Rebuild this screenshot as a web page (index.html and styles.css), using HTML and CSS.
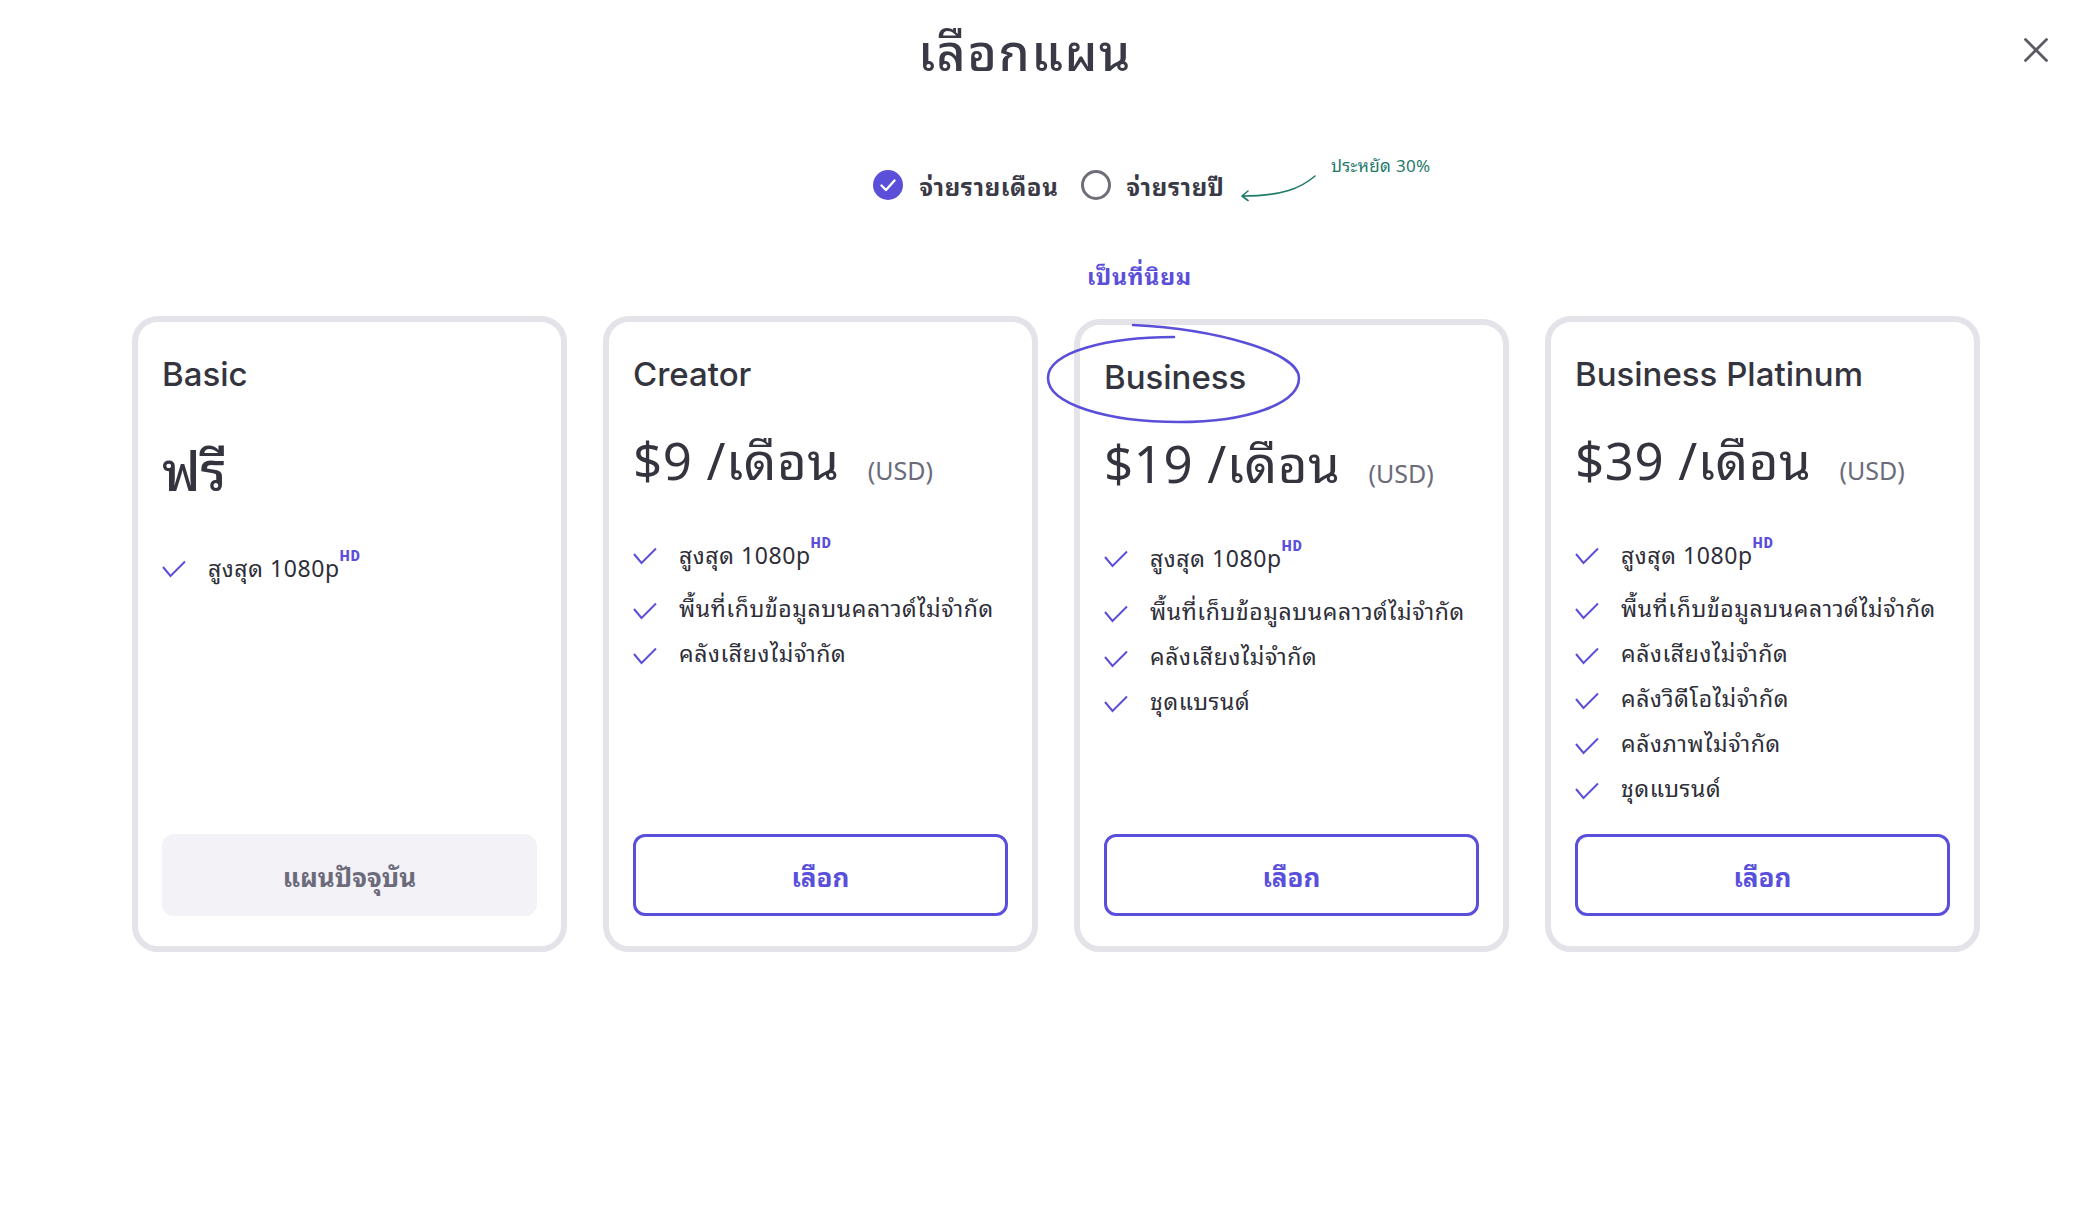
FILE: index.html
```html
<!DOCTYPE html>
<html lang="th">
<head>
<meta charset="utf-8">
<title>เลือกแผน</title>
<link rel="stylesheet" href="styles.css">
</head>
<body>
<div class="modal">
  <header class="modal-header">
    <h1 class="modal-title">เลือกแผน</h1>
    <button class="close-btn" aria-label="ปิด">
      <svg width="24" height="24" viewBox="0 0 24 24"><path d="M1.5 1.5 L22.5 22.5 M22.5 1.5 L1.5 22.5" stroke="#5b5b66" stroke-width="2.8" stroke-linecap="round" fill="none"/></svg>
    </button>
  </header>

  <div class="billing">
    <label class="billing-option">
      <span class="radio radio-checked">
        <svg width="30" height="30" viewBox="0 0 30 30"><circle cx="15" cy="15" r="15" fill="#5b4fd9"/><path d="M8.5 15.5 L13 20 L21.5 10.5" stroke="#fff" stroke-width="2.4" fill="none" stroke-linecap="round" stroke-linejoin="round"/></svg>
      </span>
      <span class="billing-label">จ่ายรายเดือน</span>
    </label>
    <label class="billing-option">
      <span class="radio radio-empty"></span>
      <span class="billing-label">จ่ายรายปี</span>
    </label>
    <div class="save-note">
      <svg class="save-arrow" width="80" height="28" viewBox="0 0 80 28"><path d="M76 2 C62 14 44 22 3 22 M3 22 L9 17 M3 22 L9 26.5" stroke="#1f7a6b" stroke-width="1.6" fill="none" stroke-linecap="round"/></svg>
      <span class="save-text">ประหยัด 30%</span>
    </div>
  </div>

  <section class="plans">
    <article class="plan">
      <h2 class="plan-name">Basic</h2>
      <div class="plan-price plan-price-free">ฟรี</div>
      <ul class="features features-free">
        <li class="feature feature-hd"><svg class="check" width="24" height="18" viewBox="0 0 24 18"><path d="M1 7 L8.5 16 L23 1.5" stroke="#5b4fd9" stroke-width="2" fill="none"/></svg><span>สูงสุด 1080p<sup class="hd">HD</sup></span></li>
      </ul>
      <button class="plan-btn plan-btn-current">แผนปัจจุบัน</button>
    </article>

    <article class="plan">
      <h2 class="plan-name">Creator</h2>
      <div class="plan-price"><span class="amount">$9 /เดือน</span><span class="currency">(USD)</span></div>
      <ul class="features">
        <li class="feature feature-hd"><svg class="check" width="24" height="18" viewBox="0 0 24 18"><path d="M1 7 L8.5 16 L23 1.5" stroke="#5b4fd9" stroke-width="2" fill="none"/></svg><span>สูงสุด 1080p<sup class="hd">HD</sup></span></li>
        <li class="feature"><svg class="check" width="24" height="18" viewBox="0 0 24 18"><path d="M1 7 L8.5 16 L23 1.5" stroke="#5b4fd9" stroke-width="2" fill="none"/></svg><span>พื้นที่เก็บข้อมูลบนคลาวด์ไม่จำกัด</span></li>
        <li class="feature"><svg class="check" width="24" height="18" viewBox="0 0 24 18"><path d="M1 7 L8.5 16 L23 1.5" stroke="#5b4fd9" stroke-width="2" fill="none"/></svg><span>คลังเสียงไม่จำกัด</span></li>
      </ul>
      <button class="plan-btn">เลือก</button>
    </article>

    <article class="plan plan-popular">
      <div class="popular-label">เป็นที่นิยม</div>
      <svg class="popular-circle" width="262" height="106" viewBox="0 0 262 106"><path d="M88 3 C170 7 254 30 254 56 C254 82 202 100 134 100 C62 100 3 82 3 56 C3 30 62 15 129 15" stroke="#5b4fd9" stroke-width="2.6" fill="none" stroke-linecap="round"/></svg>
      <h2 class="plan-name">Business</h2>
      <div class="plan-price"><span class="amount">$19 /เดือน</span><span class="currency">(USD)</span></div>
      <ul class="features">
        <li class="feature feature-hd"><svg class="check" width="24" height="18" viewBox="0 0 24 18"><path d="M1 7 L8.5 16 L23 1.5" stroke="#5b4fd9" stroke-width="2" fill="none"/></svg><span>สูงสุด 1080p<sup class="hd">HD</sup></span></li>
        <li class="feature"><svg class="check" width="24" height="18" viewBox="0 0 24 18"><path d="M1 7 L8.5 16 L23 1.5" stroke="#5b4fd9" stroke-width="2" fill="none"/></svg><span>พื้นที่เก็บข้อมูลบนคลาวด์ไม่จำกัด</span></li>
        <li class="feature"><svg class="check" width="24" height="18" viewBox="0 0 24 18"><path d="M1 7 L8.5 16 L23 1.5" stroke="#5b4fd9" stroke-width="2" fill="none"/></svg><span>คลังเสียงไม่จำกัด</span></li>
        <li class="feature"><svg class="check" width="24" height="18" viewBox="0 0 24 18"><path d="M1 7 L8.5 16 L23 1.5" stroke="#5b4fd9" stroke-width="2" fill="none"/></svg><span>ชุดแบรนด์</span></li>
      </ul>
      <button class="plan-btn">เลือก</button>
    </article>

    <article class="plan">
      <h2 class="plan-name">Business Platinum</h2>
      <div class="plan-price"><span class="amount">$39 /เดือน</span><span class="currency">(USD)</span></div>
      <ul class="features">
        <li class="feature feature-hd"><svg class="check" width="24" height="18" viewBox="0 0 24 18"><path d="M1 7 L8.5 16 L23 1.5" stroke="#5b4fd9" stroke-width="2" fill="none"/></svg><span>สูงสุด 1080p<sup class="hd">HD</sup></span></li>
        <li class="feature"><svg class="check" width="24" height="18" viewBox="0 0 24 18"><path d="M1 7 L8.5 16 L23 1.5" stroke="#5b4fd9" stroke-width="2" fill="none"/></svg><span>พื้นที่เก็บข้อมูลบนคลาวด์ไม่จำกัด</span></li>
        <li class="feature"><svg class="check" width="24" height="18" viewBox="0 0 24 18"><path d="M1 7 L8.5 16 L23 1.5" stroke="#5b4fd9" stroke-width="2" fill="none"/></svg><span>คลังเสียงไม่จำกัด</span></li>
        <li class="feature"><svg class="check" width="24" height="18" viewBox="0 0 24 18"><path d="M1 7 L8.5 16 L23 1.5" stroke="#5b4fd9" stroke-width="2" fill="none"/></svg><span>คลังวิดีโอไม่จำกัด</span></li>
        <li class="feature"><svg class="check" width="24" height="18" viewBox="0 0 24 18"><path d="M1 7 L8.5 16 L23 1.5" stroke="#5b4fd9" stroke-width="2" fill="none"/></svg><span>คลังภาพไม่จำกัด</span></li>
        <li class="feature"><svg class="check" width="24" height="18" viewBox="0 0 24 18"><path d="M1 7 L8.5 16 L23 1.5" stroke="#5b4fd9" stroke-width="2" fill="none"/></svg><span>ชุดแบรนด์</span></li>
      </ul>
      <button class="plan-btn">เลือก</button>
    </article>
  </section>
</div>
</body>
</html>
```

FILE: styles.css
```css
* { box-sizing: border-box; }

html, body {
  margin: 0;
  padding: 0;
  background: #ffffff;
}

body {
  font-family: "Noto Sans", "Noto Sans Thai Looped", "Leelawadee UI", "Loma", "Garuda", "Tahoma", "Noto Sans Thai", sans-serif;
  color: #34343e;
}

.modal {
  position: relative;
  width: 2098px;
  min-height: 1207px;
  padding: 20px 118px 0 132px;
}

.modal-header {
  display: flex;
  justify-content: center;
  padding-right: 62px;
}

.modal-title {
  margin: 0;
  font-size: 50px;
  font-weight: 500;
  line-height: 64px;
  letter-spacing: 1.5px;
  color: #3a3a46;
}

.close-btn {
  position: absolute;
  top: 38px;
  right: 50px;
  width: 24px;
  height: 24px;
  padding: 0;
  border: 0;
  background: none;
  cursor: pointer;
}

.close-btn svg { display: block; }

.billing {
  position: relative;
  display: flex;
  justify-content: center;
  align-items: center;
  gap: 22px;
  margin-top: 84px;
  margin-left: -14px;
  height: 34px;
}

.billing-option {
  display: flex;
  align-items: center;
  gap: 16px;
}

.radio {
  width: 30px;
  height: 30px;
  border-radius: 50%;
  flex: none;
}

.radio svg { display: block; }

.radio-empty {
  border: 3px solid #6e6e7b;
}

.billing-label {
  font-size: 24px;
  font-weight: 700;
  letter-spacing: 0.6px;
  color: #3a3a46;
}

.save-note {
  position: absolute;
  left: 1121px;
  top: -14px;
  display: flex;
  align-items: flex-start;
  gap: 12px;
}

.save-arrow {
  display: block;
  margin-top: 20px;
}

.save-text {
  font-size: 17px;
  color: #1f7a6b;
  line-height: 24px;
  letter-spacing: 0.3px;
}

.plans {
  display: grid;
  grid-template-columns: repeat(4, 1fr);
  gap: 36px;
  margin-top: 114px;
  align-items: stretch;
}

.plan {
  position: relative;
  display: flex;
  flex-direction: column;
  border: 6px solid #e3e3e9;
  border-radius: 26px;
  padding: 30px 24px 30px;
  height: 636px;
  background: #fff;
}

.plan-popular {
  margin-top: 3px;
  height: 633px;
}

.popular-label {
  position: absolute;
  left: 7px;
  top: -65px;
  font-size: 23px;
  font-weight: 700;
  letter-spacing: 0.8px;
  color: #5b4fd9;
  line-height: 32px;
}

.popular-circle {
  position: absolute;
  left: -35px;
  top: -3px;
  pointer-events: none;
}

.plan-name {
  margin: 0;
  font-family: "Inter", "Noto Sans", sans-serif;
  font-size: 33px;
  font-weight: 500;
  line-height: 44px;
  color: #34343e;
}

.plan-price {
  display: flex;
  align-items: baseline;
  gap: 28px;
  margin-top: 32px;
  line-height: 64px;
  height: 64px;
}

.amount {
  font-size: 51px;
  letter-spacing: 0.6px;
  color: #34343e;
}

.currency {
  font-size: 25px;
  color: #6b6b7a;
}

.plan-price-free {
  font-size: 54px;
  font-weight: 500;
  color: #34343e;
  margin-top: 42px;
}

.features {
  list-style: none;
  margin: 38px 0 0;
  padding: 0;
  display: flex;
  flex-direction: column;
  gap: 12px;
}

.features-free {
  margin-top: 41px;
}

.feature {
  display: flex;
  align-items: center;
  gap: 22px;
  font-size: 23px;
  line-height: 33px;
  letter-spacing: 0.6px;
  color: #2e2e38;
}

.feature-hd {
  padding-top: 6px;
  margin-bottom: 8px;
}

.check {
  display: block;
  flex: none;
  margin-top: 4px;
}

.hd {
  font-family: "Roboto", "Inter", sans-serif;
  font-size: 14px;
  font-weight: 900;
  color: #5b4fd9;
  letter-spacing: 1px;
  line-height: 14px;
  vertical-align: 16px;
  margin-left: 0;
}

.plan-btn {
  margin-top: auto;
  height: 82px;
  width: 100%;
  border-radius: 12px;
  border: 3px solid #5a4fdc;
  background: #fff;
  color: #5a4fdc;
  font-family: inherit;
  font-size: 26px;
  font-weight: 700;
  cursor: pointer;
}

.plan-btn-current {
  border-color: #f2f2f7;
  background: #f2f2f7;
  color: #6b6b7b;
}
```
